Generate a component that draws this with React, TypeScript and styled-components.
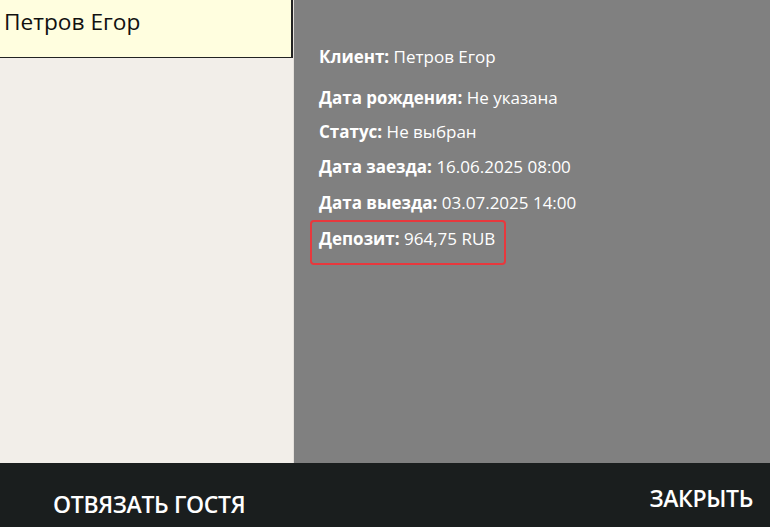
import React from 'react'
import styled, { createGlobalStyle } from 'styled-components'

const GlobalStyle = createGlobalStyle`
    html, body {
        margin: 0;
        padding: 0;
        height: 100%;
        overflow: hidden;
    }
    #root {
        height: 100%;
    }
    * {
        box-sizing: border-box;
    }
`

const Screen = styled.div`
    display: flex;
    flex-direction: column;
    width: 770px;
    height: 527px;
    font-family: 'Open Sans', 'Noto Sans', sans-serif;
`

const Main = styled.div`
    display: flex;
    flex: 1;
    min-height: 0;
`

const GuestList = styled.div`
    width: 294px;
    background: #f2eee9;
    border-right: 1px solid #e4e0db;
`

const GuestItem = styled.div<{ selected?: boolean }>`
    height: 58px;
    width: 293px;
    padding: 6px 4px 0;
    font-size: 22.7px;
    color: #111;
    background: ${(props) => (props.selected ? '#fffedf' : 'transparent')};
    border-right: 2px solid #222;
    border-bottom: 1px solid #222;
`

const Details = styled.div`
    flex: 1;
    background: #808080;
    padding: 46px 0 0 25px;
    color: #fff;
`

const Row = styled.div<{ highlight?: boolean }>`
    display: inline-block;
    font-size: 17px;
    line-height: 22px;
    padding: ${(props) => (props.highlight ? '6px 9px 13px 7px' : '0')};
    margin: ${(props) => (props.highlight ? '-5px 0 0 -9px' : '0')};
    border: ${(props) => (props.highlight ? '2.5px solid #e8383d' : 'none')};
    border-radius: 4px;
`

const RowLine = styled.div<{ gap: number }>`
    margin-bottom: ${(props) => props.gap}px;
`

const Label = styled.span`
    font-weight: 700;
`

const Footer = styled.div`
    height: 64px;
    background: #1a1e1e;
    display: flex;
    justify-content: space-between;
    padding: 0 17px 0 53px;
`

const FooterButton = styled.button<{ offset: number }>`
    background: none;
    border: none;
    padding: ${(props) => props.offset}px 0 0;
    align-self: flex-start;
    color: #fff;
    font-family: 'Open Sans', 'Noto Sans', sans-serif;
    font-size: 23px;
    font-weight: 600;
    letter-spacing: -0.35px;
    cursor: pointer;
`

const rows = [
    { label: 'Клиент:', value: 'Петров Егор', gap: 19 },
    { label: 'Дата рождения:', value: 'Не указана', gap: 12 },
    { label: 'Статус:', value: 'Не выбран', gap: 13 },
    { label: 'Дата заезда:', value: '16.06.2025 08:00', gap: 14 },
    { label: 'Дата выезда:', value: '03.07.2025 14:00', gap: 11 },
]

const App: React.FC = () => (
    <>
        <GlobalStyle />
        <Screen>
            <Main>
                <GuestList>
                    <GuestItem selected>Петров Егор</GuestItem>
                </GuestList>
                <Details>
                    {rows.map((r) => (
                        <RowLine key={r.label} gap={r.gap}>
                            <Row>
                                <Label>{r.label}</Label> {r.value}
                            </Row>
                        </RowLine>
                    ))}
                    <RowLine gap={0}>
                        <Row highlight>
                            <Label>Депозит:</Label> 964,75 RUB
                        </Row>
                    </RowLine>
                </Details>
            </Main>
            <Footer>
                <FooterButton offset={25}>ОТВЯЗАТЬ ГОСТЯ</FooterButton>
                <FooterButton offset={19}>ЗАКРЫТЬ</FooterButton>
            </Footer>
        </Screen>
    </>
)

export default App
